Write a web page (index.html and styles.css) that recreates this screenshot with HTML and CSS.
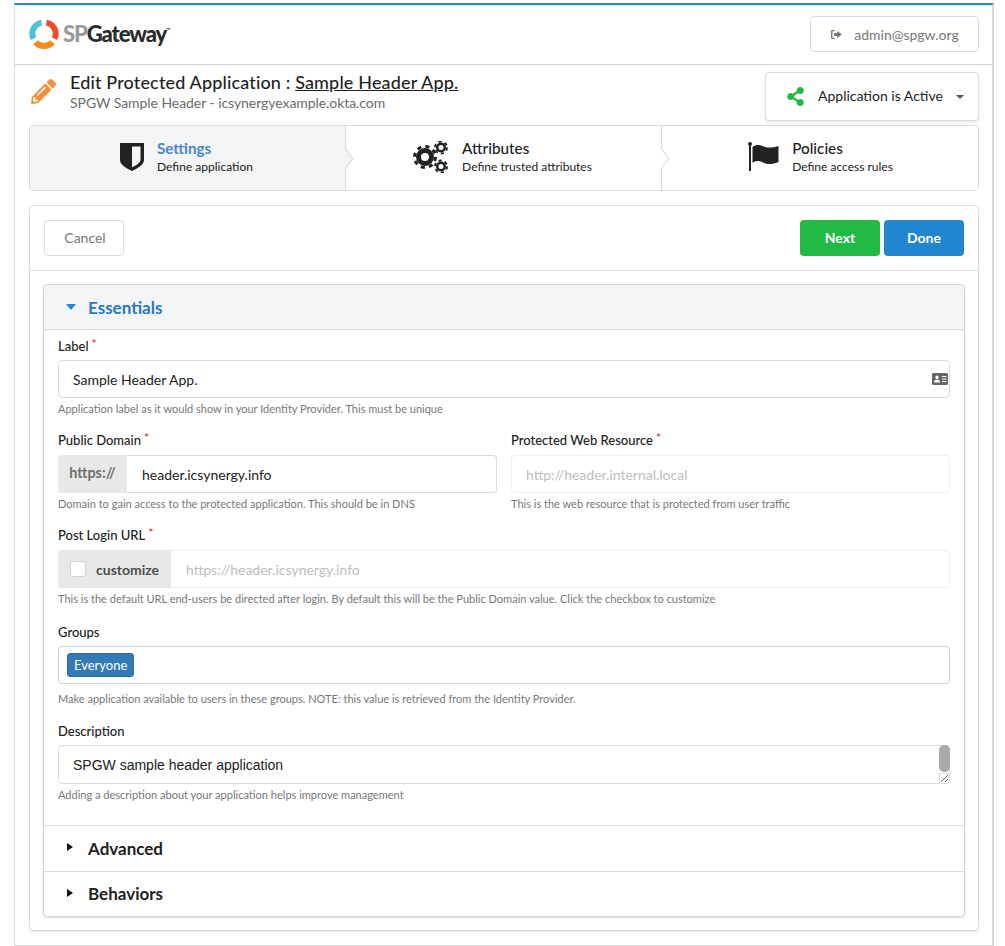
FILE: index.html
```html
<!DOCTYPE html>
<html lang="en">
<head>
<meta charset="utf-8">
<title>Edit Protected Application</title>
<link rel="stylesheet" href="styles.css">
</head>
<body>
<div class="page">
  <header class="topbar">
    <div class="logo">
      <svg class="logo-mark" viewBox="0 0 30 30" width="30" height="30" aria-hidden="true">
        <path class="arc-blue" d="M12.600 3.600 A11 11 0 0 0 4.600 19.600"/>
        <path class="arc-red" d="M17.400 3.600 A11 11 0 0 1 25.400 19.600"/>
        <path class="arc-orange" d="M6.600 23.200 A11 11 0 0 0 23.400 23.200"/>
      </svg>
      <span class="logo-text"><span class="logo-sp">SP</span>Gateway<sup class="logo-tm">™</sup></span>
    </div>
    <button class="user-btn">
      <svg viewBox="0 0 14 12" width="13" height="11" aria-hidden="true"><path class="ic-grey" d="M5 1H2.500A1.500 1.500 0 0 0 1 2.500v7A1.500 1.500 0 0 0 2.500 11H5V9.600H2.600V2.400H5zM7.600 2.200 13 6 7.600 9.800V7.600H4.400V4.400h3.200z"/></svg>
      <span>admin@spgw.org</span>
    </button>
  </header>

  <div class="titlebar">
    <svg class="pencil" viewBox="0 0 512 512" width="25" height="25" aria-hidden="true"><path d="M497.9 142.1l-46.1 46.1c-4.7 4.7-12.3 4.7-17 0l-111-111c-4.7-4.7-4.7-12.3 0-17l46.1-46.1c18.7-18.7 49.1-18.7 67.9 0l60.1 60.1c18.8 18.7 18.8 49.1 0 67.9zM284.2 99.8L21.6 362.4.4 483.9c-2.9 16.4 11.4 30.6 27.8 27.8l121.5-21.3 262.6-262.6c4.7-4.7 4.7-12.3 0-17l-111-111c-4.8-4.7-12.4-4.7-17.1 0zM124.1 339.9c-5.5-5.5-5.5-14.3 0-19.8l154-154c5.5-5.5 14.3-5.5 19.8 0s5.5 14.3 0 19.8l-154 154c-5.5 5.5-14.3 5.5-19.8 0zM88 424h48v36.3l-64.5 11.3-31.1-31.1L51.7 376H88v48z"/></svg>
    <div class="title-text">
      <h1>Edit Protected Application : <u>Sample Header App.</u></h1>
      <p>SPGW Sample Header - icsynergyexample.okta.com</p>
    </div>
    <button class="status-btn">
      <svg viewBox="0 0 448 512" width="19" height="19" aria-hidden="true"><path d="M352 320c-22.608 0-43.387 7.819-59.79 20.895l-102.486-64.054a96.551 96.551 0 0 0 0-41.683l102.486-64.054C308.613 184.181 329.392 192 352 192c53.019 0 96-42.981 96-96S405.019 0 352 0s-96 42.981-96 96c0 7.158.79 14.13 2.276 20.841L155.79 180.895C139.387 167.819 118.608 160 96 160c-53.019 0-96 42.981-96 96s42.981 96 96 96c22.608 0 43.387-7.819 59.79-20.895l102.486 64.054A96.301 96.301 0 0 0 256 416c0 53.019 42.981 96 96 96s96-42.981 96-96-42.981-96-96-96z"/></svg>
      <span class="status-label">Application is Active</span>
      <i class="caret-down"></i>
    </button>
  </div>

  <nav class="steps">
    <div class="step active">
      <svg viewBox="0 0 24 28" width="24" height="28" aria-hidden="true"><path class="ic-dark" d="M0 0H24V17C24 22 17 25.500 12 28 7 25.500 0 22 0 17ZM12 3.500H20.500V16.500C20.500 20 16 22.500 12 24.200Z" fill-rule="evenodd"/></svg>
      <div><strong>Settings</strong><small>Define application</small></div>
    </div>
    <div class="step">
      <svg viewBox="0 0 36 32" width="36" height="32" aria-hidden="true">
        <circle cx="12" cy="16" r="6.500" class="ring"/><circle cx="12" cy="16" r="10.500" class="teeth"/>
        <circle cx="28" cy="6.500" r="3.750" class="ring2"/><circle cx="28" cy="6.500" r="6" class="teeth2"/>
        <circle cx="28" cy="25.500" r="3.750" class="ring2"/><circle cx="28" cy="25.500" r="6" class="teeth2"/>
      </svg>
      <div><strong>Attributes</strong><small>Define trusted attributes</small></div>
    </div>
    <div class="step">
      <svg viewBox="0 0 32 29" width="32" height="29" aria-hidden="true"><path class="ic-dark" d="M2 3.500h2V29H2z"/><circle class="ic-dark" cx="3" cy="2" r="2"/><path class="ic-dark" d="M5.500 5C9 2.500 12 2.500 16 4.200s8 2 15.500-.2V20c-7 2.800-11 2.500-15.500.5s-7-2-10.500.3z"/></svg>
      <div><strong>Policies</strong><small>Define access rules</small></div>
    </div>
  </nav>

  <main class="card">
    <div class="toolbar">
      <button class="btn btn-plain">Cancel</button>
      <div class="toolbar-right">
        <button class="btn btn-green">Next</button>
        <button class="btn btn-blue">Done</button>
      </div>
    </div>

    <section class="accordion">
      <div class="acc-head open"><i class="caret-blue"></i><h2>Essentials</h2></div>
      <div class="acc-body">
        <div class="field field-first">
          <label>Label<em>*</em></label>
          <div class="input-wrap">
            <input class="input" type="text" value="Sample Header App.">
            <svg class="id-icon" viewBox="0 0 16 12" width="16" height="12" aria-hidden="true"><path fill-rule="evenodd" d="M1.500 0h13A1.500 1.500 0 0 1 16 1.500v9a1.500 1.500 0 0 1-1.500 1.500h-13A1.500 1.500 0 0 1 0 10.500v-9A1.500 1.500 0 0 1 1.500 0zM5 2.500a1.700 1.700 0 1 0 0 3.400 1.700 1.700 0 0 0 0-3.400zM2 9.500h6C8 7.500 7 6.500 5 6.500s-3 1-3 3zM10 3v1h4.500V3zm0 2.500v1h4.500v-1zM10 8v1h4.500V8z"/></svg>
          </div>
          <p class="hint">Application label as it would show in your Identity Provider. This must be unique</p>
        </div>

        <div class="field-row">
          <div class="field">
            <label>Public Domain<em>*</em></label>
            <div class="group">
              <span class="addon">https://</span>
              <input class="input in-group" type="text" value="header.icsynergy.info">
            </div>
            <p class="hint">Domain to gain access to the protected application. This should be in DNS</p>
          </div>
          <div class="field">
            <label>Protected Web Resource<em>*</em></label>
            <input class="input faint" type="text" placeholder="http://header.internal.local">
            <p class="hint">This is the web resource that is protected from user traffic</p>
          </div>
        </div>

        <div class="field field-post">
          <label>Post Login URL<em>*</em></label>
          <div class="group">
            <span class="addon addon-check"><i class="check"></i>customize</span>
            <input class="input in-group faint" type="text" placeholder="https://header.icsynergy.info">
          </div>
          <p class="hint">This is the default URL end-users be directed after login. By default this will be the Public Domain value. Click the checkbox to customize</p>
        </div>

        <div class="field field-tight">
          <label>Groups</label>
          <div class="multi"><span class="tag">Everyone</span></div>
          <p class="hint">Make application available to users in these groups. NOTE: this value is retrieved from the Identity Provider.</p>
        </div>

        <div class="field field-tight">
          <label>Description</label>
          <div class="input-wrap">
            <textarea class="area" rows="1">SPGW sample header application</textarea>
            <i class="scroll-thumb"></i>
            <i class="scroll-corner"></i>
          </div>
          <p class="hint">Adding a description about your application helps improve management</p>
        </div>
      </div>
      <div class="acc-head closed"><i class="caret-right"></i><h2>Advanced</h2></div>
      <div class="acc-head closed"><i class="caret-right"></i><h2>Behaviors</h2></div>
    </section>
  </main>
</div>
</body>
</html>
```
FILE: styles.css
```css
* { box-sizing: border-box; }
html, body { margin: 0; padding: 0; background: #fff; }
body { font-family: Lato, "Liberation Sans", sans-serif; color: #212121; font-size: 14px; overflow: hidden; height: 946px; }
button { font-family: inherit; cursor: pointer; }

.page { width: 980px; height: 943px; margin: 3px 0 0 14px; border: 1px solid #d9d9d9; border-top: 2px solid #2185d0; border-width: 2px 2px 1px 1px; }

.topbar { height: 60px; border-bottom: 1px solid #d4d4d5; display: flex; justify-content: space-between; align-items: flex-start; padding: 11px 13px 0 14px; }
.logo { display: flex; align-items: center; gap: 4px; margin-top: 3px; }
.logo-mark { display: block; }
.logo-mark path { fill: none; stroke-width: 6; }
.arc-blue { stroke: #4dc3d9; }
.arc-red { stroke: #ef4b2e; }
.arc-orange { stroke: #f68b1f; }
.logo-text { font-size: 22px; font-weight: 900; letter-spacing: -1.100px; color: #2b2b2b; line-height: 30px; }
.logo-sp { color: #999; }
.logo-tm { font-size: 6px; vertical-align: 10px; line-height: 0; letter-spacing: 0; font-weight: 700; }
.user-btn { width: 169px; height: 36px; display: flex; align-items: center; justify-content: center; gap: 11px; background: #fff; border: 1px solid #dcdcdc; border-radius: 4px; color: #777; font-size: 14px; }
.ic-grey { fill: #777; fill-rule: evenodd; }

.titlebar { display: flex; align-items: flex-start; height: 60px; padding: 6px 13px 0 16px; }
.pencil { fill: #f2913d; margin: 8px 14px 0 0; flex: none; }
.title-text { flex: 1; }
h1 { margin: 0; font-size: 18px; line-height: 22px; font-weight: 500; color: #1f1f1f; letter-spacing: .15px; }
.title-text p { margin: 2px 0 0; font-size: 14px; line-height: 16px; color: #6b6b6b; letter-spacing: -.06px; }
.status-btn { width: 214px; height: 49px; margin-top: 1px; flex: none; display: flex; align-items: center; padding: 0 16px 0 20px; gap: 13px; background: #fff; border: 1px solid #dcdcdc; border-radius: 4px; box-shadow: 0 1px 2px rgba(0,0,0,.12); font-size: 14px; color: #212121; }
.status-btn svg { fill: #21ba45; flex: none; }
.status-label { white-space: nowrap; margin-bottom: 3px; }
.status-btn .caret-down { margin: 0 2px 0 auto; }
.caret-down { width: 0; height: 0; border: 4px solid transparent; border-top: 4px solid #555; border-bottom: 0; }

.steps { display: grid; grid-template-columns: 316px 316px 1fr; margin: 0 13px 0 14px; height: 66px; border: 1px solid #dcdcdc; border-radius: 4px; }
.step { position: relative; display: flex; align-items: center; justify-content: center; gap: 13px; background: #fff; border-right: 1px solid #d8d8d8; padding: 0 2px 3px 0; }
.step:last-child { border-right: 0; border-radius: 0 4px 4px 0; padding-right: 0; }
.step.active { background: #f3f4f5; border-radius: 4px 0 0 4px; }
.step:not(:last-child)::after { content: ""; position: absolute; right: -7px; top: 26px; width: 12px; height: 12px; background: #fff; border: 1px solid #d8d8d8; border-width: 1px 1px 0 0; transform: rotate(45deg) skew(8deg, 8deg); z-index: 1; }
.step.active::after { background: #f3f4f5; }
.step strong { display: block; font-size: 15.300px; line-height: 18px; margin-bottom: 1px; font-weight: 500; color: #212121; }
.step.active strong { color: #4a86c9; font-weight: 700; font-size: 15.200px; }
.step small { display: block; font-size: 12px; line-height: 17px; color: #212121; }
.step > svg { flex: none; }
.ic-dark { fill: #222; }
.ring { fill: none; stroke: #222; stroke-width: 5; }
.teeth { fill: none; stroke: #222; stroke-width: 3; stroke-dasharray: 4.100 4.150; }
.ring2 { fill: none; stroke: #222; stroke-width: 2.500; }
.teeth2 { fill: none; stroke: #222; stroke-width: 2; stroke-dasharray: 3.100 3.180; }

.card { margin: 14px 13px 0 14px; height: 726px; border: 1px solid #dcdcdc; border-radius: 4px; box-shadow: 0 1px 2px rgba(0,0,0,.1); }
.toolbar { height: 65px; padding: 14px 14px 0; display: flex; justify-content: space-between; align-items: flex-start; border-bottom: 1px solid #dcdcdc; }
.toolbar-right { display: flex; gap: 4px; }
.btn { width: 80px; height: 36px; padding: 0 0 2px; border-radius: 4px; font-size: 14px; border: 0; color: #fff; font-weight: 700; }
.btn-plain { background: #fff; border: 1px solid #dcdcdc; color: #777; font-weight: 400; padding-left: 2px; }
.btn-green { background: #21ba45; }
.btn-blue { background: #2185d0; }

.accordion { margin: 13px 13px 0; height: 633px; border: 1px solid #d4d4d5; border-radius: 4px; box-shadow: 0 1px 2px rgba(0,0,0,.15); display: flex; flex-direction: column; }
.acc-head { display: flex; align-items: center; padding-left: 22px; gap: 12px; height: 45px; }
.acc-head h2 { margin: 0; font-size: 17px; line-height: 22px; font-weight: 700; }
.acc-head.open { background: #f3f4f5; border-bottom: 1px solid #d4d4d5; border-radius: 4px 4px 0 0; height: 45px; padding-top: 1px; }
.acc-head.open h2 { color: #2a78bd; }
.acc-head.closed { border-top: 1px solid #dcdcdc; height: 46px; padding-left: 23px; gap: 15px; }
.acc-head.closed:last-child { height: 45px; }
.caret-blue { width: 0; height: 0; border: 5.500px solid transparent; border-top: 6px solid #2185d0; border-bottom: 0; margin-bottom: 2px; }
.caret-right { width: 0; height: 0; border: 4.500px solid transparent; border-left: 6px solid #111; border-right: 0; margin-bottom: 3px; }

.acc-body { flex: 1; padding: 6px 14px 0; }
.field { margin-bottom: 15px; min-width: 0; }
.field-first label { padding-top: 1px; }
.field-post { margin-bottom: 16px; }
.field-tight label { padding-top: 1px; }
.field-tight .multi { margin-bottom: 4px; }
.field-row { display: grid; grid-template-columns: 439px 439px; gap: 14px; }
label { display: block; font-size: 13px; line-height: 18px; height: 24px; font-weight: 500; color: #212121; }
label em { color: #db2828; font-style: normal; font-size: 12px; margin-left: 3px; position: relative; top: -3px; }
.input-wrap { position: relative; }
.input { display: block; width: 100%; height: 38px; padding: 0 14px; border: 1px solid #dcdcdc; border-radius: 4px; background: #fff; font: 14px Lato, "Liberation Sans", sans-serif; color: #212121; outline: 0; }
.input::placeholder { color: #bdbdbd; opacity: 1; }
.id-icon { position: absolute; right: 2px; top: 13px; fill: #666; }
.group { display: flex; height: 38px; }
.addon { flex: none; width: 69px; display: flex; align-items: center; justify-content: center; padding-bottom: 3px; background: #e8e8e8; border-radius: 4px 0 0 4px; font-size: 14.400px; font-weight: 700; color: #6e6e6e; }
.addon-check { width: 113px; justify-content: flex-start; padding: 0 0 0 12px; gap: 10px; color: #4d4d4d; font-size: 14px; }
.check { width: 16px; height: 16px; background: #fff; border: 1px solid #d4d4d5; border-radius: 3px; }
.in-group { flex: 1; width: auto; padding-left: 15px; border-left: 0; border-radius: 0 4px 4px 0; }
.faint { border-color: #efefef; }
.hint { margin: 0; font-size: 11.030px; line-height: 14px; height: 18px; padding-top: 4px; color: #777; }
.multi { height: 38px; border: 1px solid #d0d0d0; border-radius: 4px; padding: 6px 8px; }
.tag { display: inline-block; height: 24px; padding: 0 6px; line-height: 23px; background: #337ab7; border: 1px solid #2e6da4; border-radius: 3px; font-size: 13px; color: #fff; }
.area { display: block; width: 100%; height: 39px; padding: 11px 14px; border: 1px solid #dcdcdc; border-radius: 4px; font: 14px/16px "Liberation Sans", Arial, sans-serif; color: #212121; outline: 0; resize: vertical; overflow: hidden; }
.scroll-thumb { position: absolute; right: 0; top: 0; width: 11px; height: 27px; background: #aaa; border-radius: 5px; pointer-events: none; }
.scroll-corner { position: absolute; right: 1px; bottom: 1px; width: 10px; height: 10px; border: 1px solid #dcdcdc; border-width: 1px 0 0 1px; pointer-events: none; }
```
